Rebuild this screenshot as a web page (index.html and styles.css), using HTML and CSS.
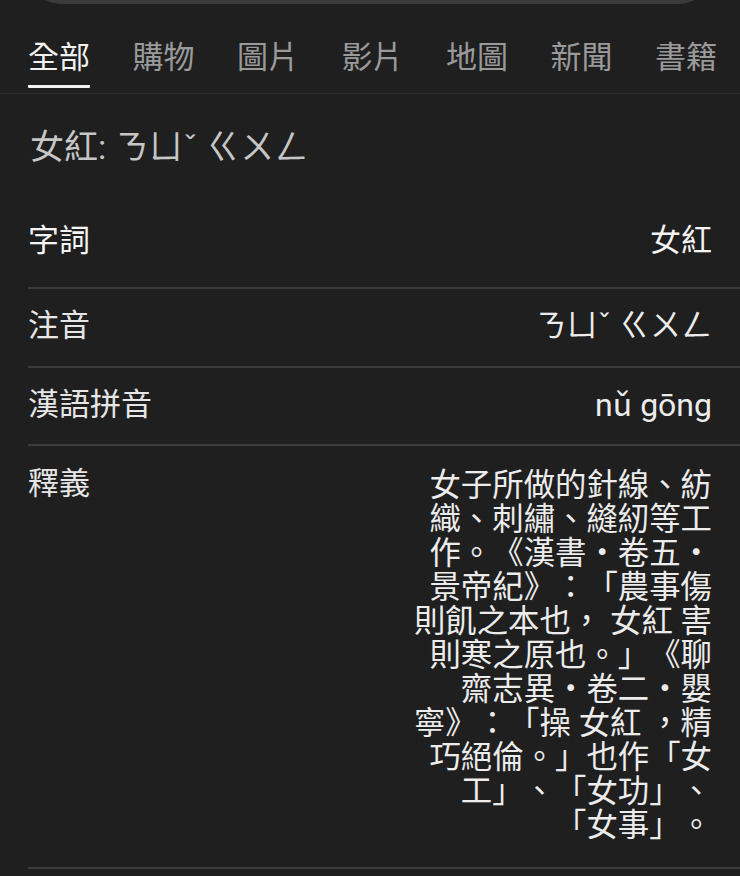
FILE: index.html
```html
<!DOCTYPE html>
<html lang="zh-Hant">
<head>
<meta charset="utf-8">
<title>女紅</title>
<link rel="stylesheet" href="styles.css">
</head>
<body>
<div class="search"></div>
<nav class="tabs">
  <div class="tab active">全部</div>
  <div class="tab">購物</div>
  <div class="tab">圖片</div>
  <div class="tab">影片</div>
  <div class="tab">地圖</div>
  <div class="tab">新聞</div>
  <div class="tab">書籍</div>
</nav>
<h1 class="title">女紅: ㄋㄩˇ ㄍㄨㄥ</h1>
<div class="table">
  <div class="row first">
    <div class="label strong">字詞</div>
    <div class="value strong">女紅</div>
  </div>
  <div class="row second">
    <div class="label">注音</div>
    <div class="value">ㄋㄩˇ ㄍㄨㄥ</div>
  </div>
  <div class="row third">
    <div class="label">漢語拼音</div>
    <div class="value latin">nǔ gōng</div>
  </div>
  <div class="row last">
    <div class="label">釋義</div>
    <div class="value def">女子所做的針線、紡<br>織、刺繡、縫紉等工<br>作。《漢書・卷五・<br>景帝紀》：「農事傷<br>則飢之本也， 女紅 害<br>則寒之原也。」《聊<br>齋志異・卷二・嬰<br>寧》：「操 女紅 ，精<br>巧絕倫。」也作「女<br>工」、「女功」、<br>「女事」。</div>
  </div>
</div>
</body>
</html>
```
FILE: styles.css
```css
html, body {
  margin: 0;
  padding: 0;
  background: #1f1f1f;
}
body {
  width: 740px;
  height: 876px;
  overflow: hidden;
  font-family: Roboto, "Noto Sans CJK TC", sans-serif;
  color: #e8e8e8;
  text-spacing-trim: space-all;
  font-kerning: none;
}
.search {
  height: 60px;
  margin: -56px 32px 0;
  border-radius: 28px;
  background: #3a3a3a;
}
.tabs {
  display: flex;
  gap: 42.5px;
  padding: 37px 0 0 28px;
  border-bottom: 1px solid #2b2b2b;
  height: 52px;
  box-sizing: content-box;
}
.tab {
  font-size: 31px;
  line-height: 34px;
  color: #9a9a9a;
  white-space: nowrap;
  height: 47px;
  box-sizing: border-box;
}
.tab.active {
  color: #f2f2f2;
  border-bottom: 3px solid #f2f2f2;
  border-radius: 0 0 1px 1px;
}
.title {
  margin: 34px 0 0 30px;
  font-size: 34px;
  line-height: 38px;
  font-weight: 400;
  color: #c6c6c6;
}
.table {
  margin: 37px 0 0 28px;
}
.row {
  display: flex;
  justify-content: space-between;
  align-items: flex-start;
  padding: 20px 28px 23px 0;
  border-bottom: 2px solid #3c3c3c;
  font-size: 31px;
  line-height: 34px;
}
.row.first {
  padding: 21px 28px 29px 0;
}
.row.third {
  padding: 20px 28px 22px 0;
}
.row.last {
  padding: 21px 28px 24px 0;
}
.label {
  color: #e6e6e6;
  white-space: nowrap;
}
.value {
  color: #ececec;
  text-align: right;
  white-space: nowrap;
}
.strong {
  color: #f4f4f4;
}
.latin {
  font-size: 32px;
}
.def {
  padding-top: 2px;
  font-size: 31.4px;
}
```
